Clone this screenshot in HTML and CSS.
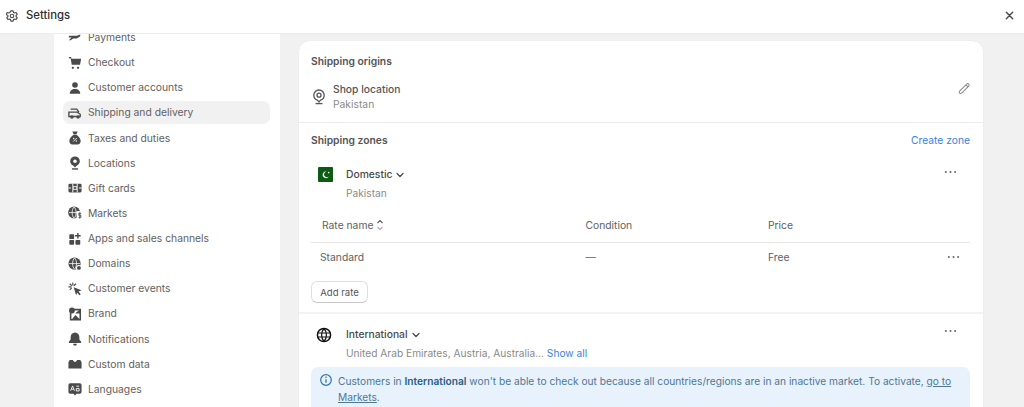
FILE: index.html
```html
<!DOCTYPE html>
<html lang="en">
<head>
<meta charset="utf-8">
<title>Settings</title>
<link rel="stylesheet" href="styles.css">
</head>
<body>
<svg class="defs" width="0" height="0" aria-hidden="true">
<symbol id="pin" viewBox="0 0 14 16"><path d="M7 1a5.200 5.200 0 0 0-5.200 5.200c0 2.400 1.600 4.400 3.700 5L7 13l1.500-1.800c2.100-.6 3.700-2.600 3.700-5A5.200 5.200 0 0 0 7 1Z" fill="none" stroke="currentColor" stroke-width="1.300"/><circle cx="7" cy="6.200" r="2" fill="none" stroke="currentColor" stroke-width="1.300"/><path d="M3.500 14.600h7" stroke="currentColor" stroke-width="1.300"/></symbol>
<symbol id="dots" viewBox="0 0 14 4"><circle cx="2" cy="2" r="1.150" fill="currentColor"/><circle cx="7" cy="2" r="1.150" fill="currentColor"/><circle cx="12" cy="2" r="1.150" fill="currentColor"/></symbol>
<symbol id="chev" viewBox="0 0 10 10"><path d="M2 3.500 5 6.500 8 3.500" fill="none" stroke="currentColor" stroke-width="1.300" stroke-linecap="round" stroke-linejoin="round"/></symbol>
</svg>

<header class="topbar">
  <svg class="gear" viewBox="1 1 14 14"><path d="M6.700 1.500h2.600l.4 1.800 1.300.7 1.800-.6 1.300 2.200-1.400 1.300v1.200l1.400 1.300-1.300 2.200-1.800-.6-1.300.7-.4 1.800H6.700l-.4-1.800-1.300-.7-1.800.6-1.300-2.200 1.400-1.300V6.900L1.100 5.600l1.300-2.200 1.800.6 1.300-.7Z" fill="none" stroke="currentColor" stroke-width="1.300" stroke-linejoin="round" transform="translate(0 .5)"/><circle cx="8" cy="8" r="2" fill="none" stroke="currentColor" stroke-width="1.300"/></svg>
  <span class="topbar-title">Settings</span>
  <svg class="close" viewBox="0 0 10 10"><path d="M1.500 1.500l7 7m0-7-7 7" stroke="currentColor" stroke-width="1.600" stroke-linecap="round"/></svg>
</header>

<div class="layout">
  <nav class="sidebar">
    <ul class="nav-list">
      <li class="nav-item"><svg class="nav-icon" viewBox="0 0 16 16"><path d="M1 5.500h9l4-1.500v2l-4 2.500H6l-3 2H1l3-3H1Z" fill="currentColor"/></svg>Payments</li>
      <li class="nav-item"><svg class="nav-icon" viewBox="0 0 16 16"><path d="M1 1h2.500l.5 2H15l-1.200 7H4.300L3 2.500H1Z" fill="currentColor"/><circle cx="5.500" cy="13.500" r="1.300" fill="currentColor"/><circle cx="11.500" cy="13.500" r="1.300" fill="currentColor"/></svg>Checkout</li>
      <li class="nav-item"><svg class="nav-icon" viewBox="0 0 16 16"><circle cx="8" cy="4.500" r="3.200" fill="currentColor"/><path d="M2 14.500c0-3.500 2.500-5.500 6-5.500s6 2 6 5.500Z" fill="currentColor"/></svg>Customer accounts</li>
      <li class="nav-item nav-item-active"><svg class="nav-icon" viewBox="0 0 16 16"><path d="M1 7h9.500l3.500 2.500V12H1ZM3 3.500h7l2.500 3.500" fill="none" stroke="currentColor" stroke-width="1.500"/><circle cx="4.500" cy="12.500" r="2" fill="currentColor"/><circle cx="11.500" cy="12.500" r="2" fill="currentColor"/></svg>Shipping and delivery</li>
      <li class="nav-item"><svg class="nav-icon" viewBox="0 0 16 16"><path d="M5 .5h6l-1.500 3.500h-3ZM6 4.500h4c2.500 1.500 4.500 4.500 4.500 7 0 2-1.500 4-3.500 4H5c-2 0-3.500-2-3.500-4 0-2.500 2-5.500 4.500-7Z" fill="currentColor"/><path d="M6 12l4-4" stroke="#fff" stroke-width="1"/><circle cx="6.500" cy="8.500" r=".8" fill="#fff"/><circle cx="9.500" cy="11.500" r=".8" fill="#fff"/></svg>Taxes and duties</li>
      <li class="nav-item"><svg class="nav-icon" viewBox="0 0 16 16"><path d="M8 .5a5.500 5.500 0 0 0-5.500 5.500c0 2.500 1.700 4.300 3.700 5L8 13l1.800-2c2-.7 3.700-2.500 3.700-5A5.500 5.500 0 0 0 8 .5Z" fill="currentColor"/><circle cx="8" cy="6" r="2" fill="#fff"/><path d="M4.500 14.800h7" stroke="currentColor" stroke-width="1.600"/></svg>Locations</li>
      <li class="nav-item"><svg class="nav-icon" viewBox="0 0 16 16"><rect x=".5" y="3" width="15" height="10" rx="1.500" fill="currentColor"/><path d="M5.500 3v3.200M10.500 3v3.200M5.500 9.800V13M10.500 9.800V13M.5 8h3M12.500 8h3" stroke="#fff" stroke-width="1.100"/><rect x="5" y="6" width="6" height="4" fill="#fff"/><rect x="6.500" y="7" width="3" height="2" fill="currentColor"/></svg>Gift cards</li>
      <li class="nav-item"><svg class="nav-icon" viewBox="0 0 16 16"><circle cx="7" cy="7.500" r="6.800" fill="currentColor"/><path d="M1 7.500h12M7 1c-3 3-3 10 0 13M7 1c3 3 3 10 0 13" stroke="#fff" stroke-width=".9" fill="none"/><rect x="9.800" y="5.800" width="6.200" height="10.200" fill="#fff"/><path d="M15 8.500h-2.700v2.100h2.400v2.400H12M13.500 7v7.500" stroke="currentColor" stroke-width="1" fill="none"/></svg>Markets</li>
      <li class="nav-item"><svg class="nav-icon" viewBox="0 0 16 16"><rect x="1.500" y="2.500" width="5.500" height="5.500" rx="1" fill="currentColor"/><rect x="1.500" y="9" width="5.500" height="5.500" rx="1" fill="currentColor"/><rect x="8.500" y="9" width="5.500" height="5.500" rx="1" fill="currentColor"/><path d="M11.300 1v6.500M8 4.300h6.500" stroke="currentColor" stroke-width="1.600"/></svg>Apps and sales channels</li>
      <li class="nav-item"><svg class="nav-icon" viewBox="0 0 16 16"><circle cx="7.500" cy="7.500" r="7" fill="currentColor"/><path d="M1 7.500h13M7.500 1c-3 3-3 10 0 13M7.500 1c3 3 3 10 0 13" stroke="#fff" stroke-width=".9" fill="none"/><circle cx="12.500" cy="12.500" r="3.500" fill="#fff"/><circle cx="12.500" cy="12.500" r="2.200" fill="currentColor"/></svg>Domains</li>
      <li class="nav-item"><svg class="nav-icon" viewBox="0 0 16 16"><path d="M6.500 6l9 3.500-3.500 1.400 2.600 3-1.500 1.300-2.600-3-1.300 3Z" fill="currentColor"/><path d="M5.500 .5v3.500M.5 5.500h3.500M2 2l2.300 2.300M9 2 6.700 4.300M2 9l2.300-2.300" stroke="currentColor" stroke-width="1.300"/></svg>Customer events</li>
      <li class="nav-item"><svg class="nav-icon" viewBox="0 0 16 16"><path d="M3 3h11v11.500H3Z" fill="none" stroke="currentColor" stroke-width="1.800"/><circle cx="4.500" cy="4" r="3.300" fill="currentColor"/><path d="M4 14.500l4.500-5.500 5.500 5.500ZM8.500 7.500h5.500V2.500L12 2.500l1 1-4 3Z" fill="currentColor"/></svg>Brand</li>
      <li class="nav-item"><svg class="nav-icon" viewBox="0 0 16 16"><path d="M8 .5c3.300 0 5 2.500 5 5.500v2.500L15 11v1.500H1V11l2-2.500V6C3 3 4.700.5 8 .5Z" fill="currentColor"/><path d="M5.800 13.500h4.400a2.200 2.200 0 0 1-4.400 0Z" fill="currentColor"/></svg>Notifications</li>
      <li class="nav-item"><svg class="nav-icon" viewBox="0 0 16 16"><path d="M.5 6 2 3.500h3.500L7 5.500h2l1.500-2H14L15.500 6v7H.5Z" fill="currentColor"/></svg>Custom data</li>
      <li class="nav-item"><svg class="nav-icon" viewBox="0 0 16 16"><path d="M2.500 1.500h11A2 2 0 0 1 15.500 3.500v8a2 2 0 0 1-2 2H9.800L8 15.500l-1.800-2H2.500a2 2 0 0 1-2-2v-8A2 2 0 0 1 2.500 1.500Z" fill="currentColor"/><path d="M3 10 5.200 4.500 7.400 10M3.900 8.300h2.600M9.500 4.800h3.200M9.500 7.500h3.200V10.300H9.500Z" stroke="#fff" stroke-width="1" fill="none"/></svg>Languages</li>
    </ul>
  </nav>

  <main class="content">
    <section class="card">
      <div class="origins">
        <h2 class="section-title">Shipping origins</h2>
        <div class="origin-row">
          <svg class="origin-icon"><use href="#pin"/></svg>
          <div class="origin-text">
            <div class="origin-name">Shop location</div>
            <div class="muted">Pakistan</div>
          </div>
          <svg class="edit" viewBox="0 0 14 14"><path d="M2 9.500 9.300 2.200a1.500 1.500 0 0 1 2.200 2.200L4.500 11.500c-.8.800-2.400 1-2.800.6-.4-.4-.5-1.800.3-2.600ZM8.500 3l2.200 2.200" fill="none" stroke="currentColor" stroke-width="1.100"/></svg>
        </div>
      </div>

      <div class="zones">
        <div class="zones-head">
          <h2 class="section-title">Shipping zones</h2>
          <a class="link">Create zone</a>
        </div>

        <div class="zone-head zone-domestic">
          <svg class="flag" viewBox="0 0 15 15"><rect width="15" height="15" rx="1" fill="#0b5c10"/><path d="M8.800 4.800a3.200 3.200 0 1 0 2 4.400 2.700 2.700 0 1 1-2-4.400Z" fill="#fff"/><circle cx="10.700" cy="5.600" r=".8" fill="#fff"/></svg>
          <div class="zone-text">
            <div class="zone-name">Domestic <svg class="chev"><use href="#chev"/></svg></div>
            <div class="muted zone-sub">Pakistan</div>
          </div>
          <svg class="dots"><use href="#dots"/></svg>
        </div>

        <div class="rate-table">
          <div class="rate-row rate-header">
            <span class="col-name col-name-head">Rate name
              <svg class="sort" viewBox="0 0 8 12"><path d="M1.500 4 4 1.500 6.500 4" fill="none" stroke="#555" stroke-width="1.100"/><path d="M1.500 8 4 10.500 6.500 8" fill="none" stroke="#aaa" stroke-width="1.100"/></svg>
            </span>
            <span class="col-cond">Condition</span>
            <span class="col-price">Price</span>
          </div>
          <div class="rate-row rate-body">
            <span class="col-name">Standard</span>
            <span class="col-cond">—</span>
            <span class="col-price">Free</span>
            <svg class="dots dots-row"><use href="#dots"/></svg>
          </div>
        </div>
        <button class="btn" type="button">Add rate</button>
      </div>

      <div class="intl">
        <div class="zone-head">
          <svg class="globe" viewBox="0 0 16 16"><circle cx="8" cy="8" r="6.600" fill="none" stroke="#111" stroke-width="1.500"/><path d="M1.500 6h13M1.500 10h13M8 1.500c-3.200 3.500-3.200 9.500 0 13M8 1.500c3.200 3.500 3.200 9.500 0 13" fill="none" stroke="#111" stroke-width="1.200"/></svg>
          <div class="zone-text">
            <div class="zone-name">International <svg class="chev"><use href="#chev"/></svg></div>
            <div class="muted zone-sub">United Arab Emirates, Austria, Australia... <a class="link">Show all</a></div>
          </div>
          <svg class="dots dots-intl"><use href="#dots"/></svg>
        </div>
        <div class="banner">
          <svg class="info" viewBox="0 0 14 14"><circle cx="7" cy="7" r="5.300" fill="none" stroke="currentColor" stroke-width="1.200"/><path d="M7 6.300v3.500" stroke="currentColor" stroke-width="1.300"/><circle cx="7" cy="4.300" r=".8" fill="currentColor"/></svg>
          <p class="banner-text">Customers in <strong>International</strong> won't be able to check out because all countries/regions are in an inactive market. To activate, <u>go to Markets</u>.</p>
        </div>
      </div>
    </section>
  </main>
</div>
</body>
</html>
```
FILE: styles.css
```css
* { box-sizing: border-box; }
html, body { margin: 0; height: 100%; overflow: hidden; }
body {
  display: flex;
  flex-direction: column;
  background: #f1f1f1;
  color: #616161;
  font: 400 10.3px/15px Inter, "Liberation Sans", sans-serif;
}
.defs { position: absolute; }
.topbar {
  flex: 0 0 34px;
  display: flex;
  align-items: center;
  padding: 0 10px 2px 6px;
  background: #fff;
  border-bottom: 1px solid #ebebeb;
  position: relative;
  z-index: 1;
  color: #303030;
}
.gear { width: 12px; height: 12px; color: #4a4a4a; }
.topbar-title { margin-left: 8px; font-size: 11.3px; font-weight: 500; }
.close { width: 9px; height: 9px; margin-left: auto; color: #4a4a4a; }
.layout { flex: 1; display: flex; min-height: 0; }
.sidebar {
  width: 226px;
  margin-left: 54px;
  background: #fff;
  overflow: hidden;
}
.nav-list { list-style: none; margin: -8px 0 0; padding: 0 10px 0 9px; }
.nav-item {
  display: flex;
  align-items: center;
  gap: 6px;
  height: 23px;
  margin-bottom: 2.14px;
  padding-left: 5px;
  border-radius: 7px;
}
.nav-item-active { background: #f1f1f1; }
.nav-icon { width: 14px; height: 14px; flex: none; color: #4a4a4a; }
.content { flex: 1; padding: 7px 41px 0 19px; min-width: 0; }
.card {
  background: #fff;
  border-radius: 10px 10px 0 0;
  box-shadow: 0 0 1px rgba(0,0,0,.12);
  height: 420px;
}
.section-title { margin: 0; font-size: 10.3px; line-height: 15px; font-weight: 600; color: #555; }
.origins { padding: 13px 12px 10px; border-bottom: 1px solid #ebebeb; height: 82px; }
.origin-row { display: flex; align-items: center; margin-top: 13px; }
.origin-icon { width: 14px; height: 16px; margin-left: 1px; color: #555; }
.origin-text { margin-left: 7px; }
.origin-name { font-weight: 500; color: #555; line-height: 15px; }
.muted { color: #8a8a8a; line-height: 15px; }
.edit { width: 13px; height: 13px; margin-left: auto; margin-top: -18px; color: #8a8a8a; }
.zones { padding: 10px 13px 0 12px; height: 191px; border-bottom: 2px solid #f3f3f3; }
.zones-head { display: flex; justify-content: space-between; align-items: center; }
.link { color: #3b82e0; }
.zone-head { display: flex; align-items: flex-start; }
.zone-domestic { margin-top: 17px; }
.flag { width: 15px; height: 15px; margin: 2px 0 0 7px; flex: none; }
.globe { width: 16px; height: 16px; margin: 2px 0 0 5px; flex: none; }
.zone-text { margin-left: 13px; flex: 1; }
.intl .zone-text { margin-left: 14px; }
.zone-name { display: flex; align-items: center; gap: 3px; font-weight: 550; color: #4a4a4a; height: 19px; }
.zone-sub { margin-top: 2px; font-size: 10.2px; }
.chev { width: 10px; height: 10px; color: #4a4a4a; }
.dots { width: 13px; height: 4px; margin: 5px 13px 0 0; color: #6d6d6d; }
.dots-intl { margin: 4px 13px 0 0; }
.rate-table { margin-top: 7px; }
.rate-row { display: flex; align-items: center; position: relative; }
.rate-header { height: 35px; border-bottom: 1px solid #e5e5e5; }
.rate-body { height: 29px; }
.col-name { width: 274.5px; padding-left: 9px; }
.col-name-head { display: flex; align-items: center; gap: 3px; padding-left: 11px; }
.sort { width: 8px; height: 12px; }
.col-cond { width: 182.5px; }
.dots-row { position: absolute; right: 10px; top: 6px; margin: 6px 0 0; }
.btn {
  display: block;
  margin-top: 9px;
  height: 22px;
  width: 57px;
  padding: 0;
  font: inherit;
  font-size: 9.6px;
  color: #555;
  background: #fff;
  border: 1px solid #dedede;
  border-bottom-color: #c8c8c8;
  border-radius: 6px;
}
.intl { padding: 11px 13px 0 12px; }
.banner {
  display: flex;
  gap: 5px;
  margin-top: 6px;
  padding: 6px 8px 8px;
  background: #e8f2fc;
  border-radius: 7px 7px 0 0;
  color: #4d7795;
}
.info { width: 14px; height: 14px; flex: none; color: #2f78a8; }
.banner-text { margin: 0; line-height: 16px; font-size: 10.2px; }
.banner-text strong { font-weight: 600; color: #285e86; }
.banner-text u { color: #4d7795; }
```
